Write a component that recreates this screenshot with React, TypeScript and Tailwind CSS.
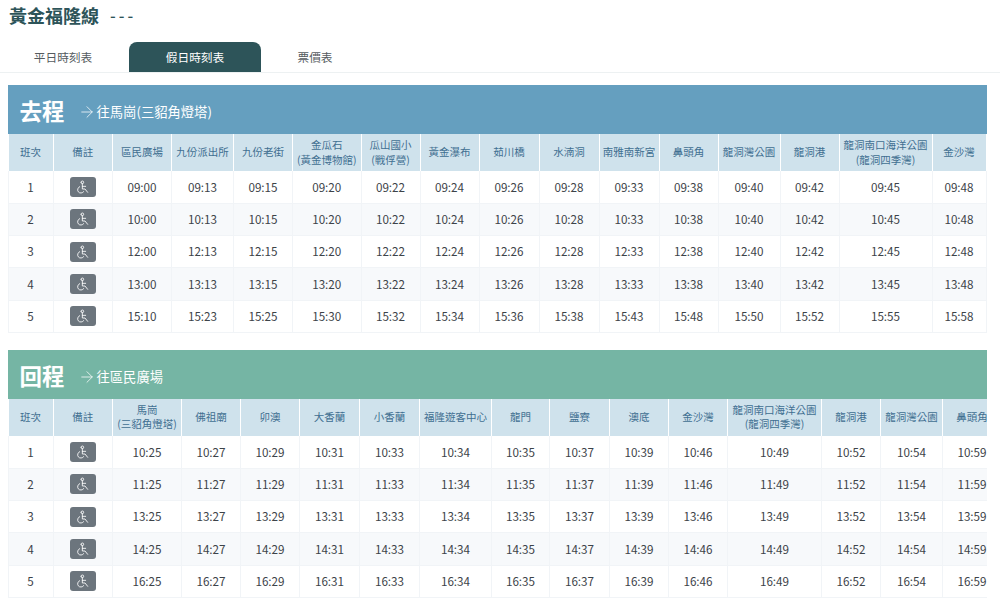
import { ArrowRight } from "lucide-react";
import { TbDisabled } from "react-icons/tb";

type Column = { label: string; sub?: string; width: string; times: string[] };

const outboundColumns: Column[] = [
  { label: "區民廣場", width: "w-[59px]", times: ["09:00", "10:00", "12:00", "13:00", "15:10"] },
  { label: "九份派出所", width: "w-[62px]", times: ["09:13", "10:13", "12:13", "13:13", "15:23"] },
  { label: "九份老街", width: "w-[59px]", times: ["09:15", "10:15", "12:15", "13:15", "15:25"] },
  { label: "金瓜石", sub: "(黃金博物館)", width: "w-[68.5px]", times: ["09:20", "10:20", "12:20", "13:20", "15:30"] },
  { label: "瓜山國小", sub: "(戰俘營)", width: "w-[59px]", times: ["09:22", "10:22", "12:22", "13:22", "15:32"] },
  { label: "黃金瀑布", width: "w-[59px]", times: ["09:24", "10:24", "12:24", "13:24", "15:34"] },
  { label: "茹川橋", width: "w-[60px]", times: ["09:26", "10:26", "12:26", "13:26", "15:36"] },
  { label: "水湳洞", width: "w-[60px]", times: ["09:28", "10:28", "12:28", "13:28", "15:38"] },
  { label: "南雅南新宮", width: "w-[60px]", times: ["09:33", "10:33", "12:33", "13:33", "15:43"] },
  { label: "鼻頭角", width: "w-[59px]", times: ["09:38", "10:38", "12:38", "13:38", "15:48"] },
  { label: "龍洞灣公園", width: "w-[62px]", times: ["09:40", "10:40", "12:40", "13:40", "15:50"] },
  { label: "龍洞港", width: "w-[59px]", times: ["09:42", "10:42", "12:42", "13:42", "15:52"] },
  { label: "龍洞南口海洋公園", sub: "(龍洞四季灣)", width: "w-[93px]", times: ["09:45", "10:45", "12:45", "13:45", "15:55"] },
  { label: "金沙灣", width: "w-[54px]", times: ["09:48", "10:48", "12:48", "13:48", "15:58"] },
];

const returnColumns: Column[] = [
  { label: "馬崗", sub: "(三貂角燈塔)", width: "w-[69px]", times: ["10:25", "11:25", "13:25", "14:25", "16:25"] },
  { label: "佛祖廟", width: "w-[59px]", times: ["10:27", "11:27", "13:27", "14:27", "16:27"] },
  { label: "卯澳", width: "w-[59px]", times: ["10:29", "11:29", "13:29", "14:29", "16:29"] },
  { label: "大香蘭", width: "w-[60px]", times: ["10:31", "11:31", "13:31", "14:31", "16:31"] },
  { label: "小香蘭", width: "w-[60px]", times: ["10:33", "11:33", "13:33", "14:33", "16:33"] },
  { label: "福隆遊客中心", width: "w-[72px]", times: ["10:34", "11:34", "13:34", "14:34", "16:34"] },
  { label: "龍門", width: "w-[58px]", times: ["10:35", "11:35", "13:35", "14:35", "16:35"] },
  { label: "鹽寮", width: "w-[60px]", times: ["10:37", "11:37", "13:37", "14:37", "16:37"] },
  { label: "澳底", width: "w-[59px]", times: ["10:39", "11:39", "13:39", "14:39", "16:39"] },
  { label: "金沙灣", width: "w-[59px]", times: ["10:46", "11:46", "13:46", "14:46", "16:46"] },
  { label: "龍洞南口海洋公園", sub: "(龍洞四季灣)", width: "w-[94px]", times: ["10:49", "11:49", "13:49", "14:49", "16:49"] },
  { label: "龍洞港", width: "w-[59px]", times: ["10:52", "11:52", "13:52", "14:52", "16:52"] },
  { label: "龍洞灣公園", width: "w-[62px]", times: ["10:54", "11:54", "13:54", "14:54", "16:54"] },
  { label: "鼻頭角", width: "w-[59px]", times: ["10:59", "11:59", "13:59", "14:59", "16:59"] },
];

function Timetable({ title, dest, banner, tableWidth, columns }: { title: string; dest: string; banner: string; tableWidth: string; columns: Column[] }) {
  return (
    <section className="mx-2 w-[979px] overflow-hidden">
      <div className={`flex h-[49px] items-center pl-[11.5px] text-white ${banner}`}>
        <h2 className="mt-[1px] text-[22.5px] leading-none font-bold">{title}</h2>
        <ArrowRight className="ml-[13px] mt-[5px] h-[18px] w-[18px]" strokeWidth={1} />
        <span className="ml-[1px] mt-[5px] text-[13.3px]">{dest}</span>
      </div>
      <table className={`-ml-[0.5px] table-fixed border-collapse ${tableWidth}`}>
        <colgroup>
          <col className="w-[45px]" />
          <col className="w-[59.5px]" />
          {columns.map((c) => (
            <col key={c.label} className={c.width} />
          ))}
        </colgroup>
        <thead>
          <tr className="h-[37px] bg-[#cfe2ec] text-[10.5px] leading-[14.5px] font-normal text-[#3f6f91]">
            <th className="border-x border-white font-normal">班次</th>
            <th className="border-x border-white font-normal">備註</th>
            {columns.map((c) => (
              <th key={c.label} className="border-x border-white px-0 font-normal whitespace-nowrap">
                {c.label}
                {c.sub && <div>{c.sub}</div>}
              </th>
            ))}
          </tr>
        </thead>
        <tbody>
          {[0, 1, 2, 3, 4].map((i) => (
            <tr key={i} className={`h-[32.3px] border-b border-[#f1f4f7] text-center text-[11.7px] text-[#3d4349] ${i % 2 === 1 ? "bg-[#f7f9fb]" : "bg-white"}`}>
              <td className="border-x border-[#f1f4f7] pb-px">{i + 1}</td>
              <td className="border-x border-[#f1f4f7] pb-px">
                <span className="inline-flex h-[20px] w-[26px] items-center justify-center rounded-[3px] bg-[#6c757d] align-middle text-white">
                  <TbDisabled className="h-[16px] w-[16px]" strokeWidth={1.3} />
                </span>
              </td>
              {columns.map((c) => (
                <td key={c.label} className="border-x border-[#f1f4f7] pb-px">
                  {c.times[i]}
                </td>
              ))}
            </tr>
          ))}
        </tbody>
      </table>
    </section>
  );
}

export default function App() {
  return (
    <div className="h-[600px] w-[1000px] overflow-hidden bg-white font-['Noto_Sans_CJK_TC','Noto_Sans',sans-serif]">
      <header className="flex h-[30px] items-center pl-[9px] text-[#2d5459]">
        <h1 className="text-[18px] font-bold">黃金福隆線</h1>
        <span className="ml-[11px] text-[16px] font-medium tracking-[3px]">---</span>
      </header>
      <nav className="mt-[12px] flex h-[31px] border-b border-[#edf1f2] text-[11.7px] text-[#555b60]">
        <div className="flex w-[129px] items-center justify-center pr-[3px]">平日時刻表</div>
        <div className="flex w-[132px] items-center justify-center rounded-t-[8px] bg-[#2d5459] text-white">假日時刻表</div>
        <div className="flex w-[108px] items-center justify-center">票價表</div>
      </nav>
      <div className="mt-[12px] flex flex-col gap-[17px]">
        <Timetable title="去程" dest="往馬崗(三貂角燈塔)" banner="bg-[#659fbf]" tableWidth="w-[979px]" columns={outboundColumns} />
        <Timetable title="回程" dest="往區民廣場" banner="bg-[#75b5a4]" tableWidth="w-[993.5px]" columns={returnColumns} />
      </div>
    </div>
  );
}
